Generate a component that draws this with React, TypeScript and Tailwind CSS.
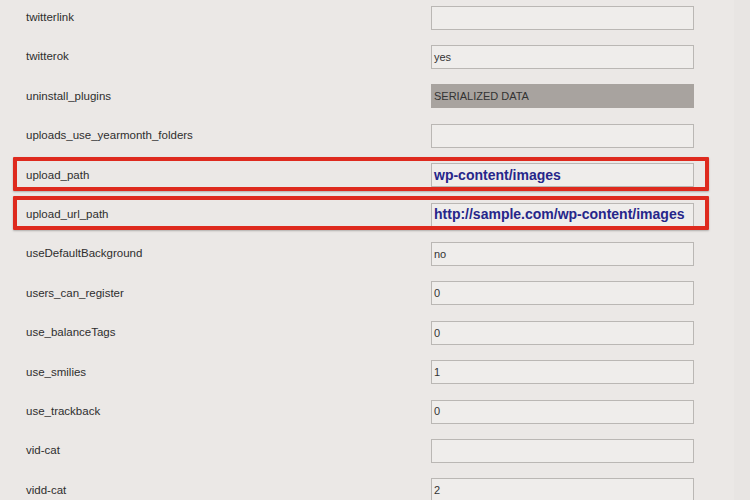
import React from "react";

type Row = { label: string; value: string; kind?: "serial" | "blue" };

const rows: Row[] = [
  { label: "twitterlink", value: "" },
  { label: "twitterok", value: "yes" },
  { label: "uninstall_plugins", value: "SERIALIZED DATA", kind: "serial" },
  { label: "uploads_use_yearmonth_folders", value: "" },
  { label: "upload_path", value: "wp-content/images", kind: "blue" },
  { label: "upload_url_path", value: "http://sample.com/wp-content/images", kind: "blue" },
  { label: "useDefaultBackground", value: "no" },
  { label: "users_can_register", value: "0" },
  { label: "use_balanceTags", value: "0" },
  { label: "use_smilies", value: "1" },
  { label: "use_trackback", value: "0" },
  { label: "vid-cat", value: "" },
  { label: "vidd-cat", value: "2" },
];

export default function App() {
  return (
    <div
      className="w-[750px] h-[500px] overflow-hidden bg-[#ebe8e6] flex"
      style={{ fontFamily: '"Liberation Sans", Arial, sans-serif' }}
    >
      <div className="w-[734px] flex flex-col mt-[-2px]">
        {rows.map((r) => (
          <div key={r.label} className="relative h-[39.4px] shrink-0 flex items-center">
            <div className="w-[431px] pl-[26px] text-[11.5px] text-[#2e2e2e]">{r.label}</div>
            {r.kind === "serial" ? (
              <div className="w-[263px] h-[24px] bg-[#a8a39f] flex items-center pl-[3px] text-[11px] text-[#333]">
                {r.value}
              </div>
            ) : (
              <div
                className={
                  r.kind === "blue"
                    ? "w-[263px] h-[24px] border border-[#bab7b4] bg-[#efedeb] flex items-center pl-[2px] text-[14px] font-bold text-[#26268a] whitespace-nowrap"
                    : "w-[263px] h-[24px] border border-[#bab7b4] bg-[#efedeb] flex items-center pl-[2px] text-[11px] text-[#333]"
                }
              >
                {r.value}
              </div>
            )}
            {r.kind === "blue" && (
              <div className="absolute left-[13px] w-[696px] top-[1px] h-[34px] border-[4px] border-[#de2a1e] rounded-[1px] pointer-events-none shadow-[0_1px_2px_rgba(0,0,0,0.25)]" />
            )}
          </div>
        ))}
      </div>
      <div className="flex-1 bg-[#e8e5e3]" />
    </div>
  );
}
